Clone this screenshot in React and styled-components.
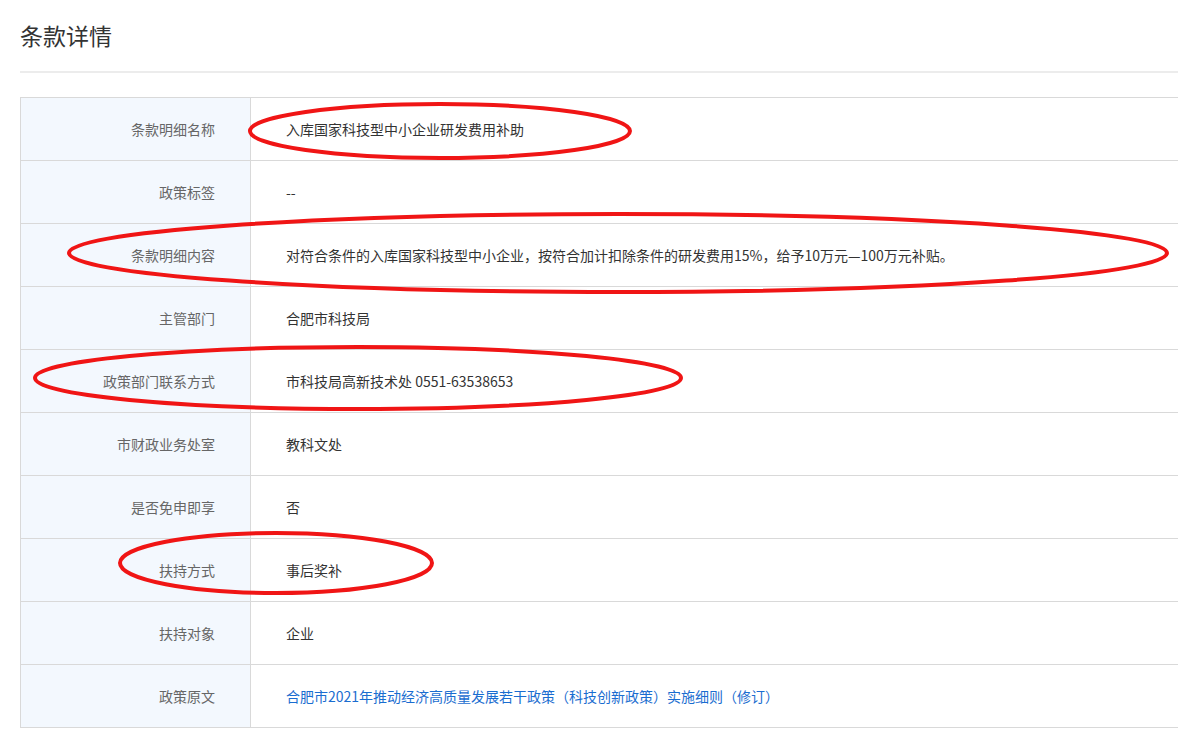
import React from "react";
import styled, { createGlobalStyle } from "styled-components";

const Global = createGlobalStyle`
  html, body { margin: 0; background: #fff; overflow: hidden; }
  body { font-family: "Microsoft YaHei", "Noto Sans CJK SC", "Noto Sans", sans-serif; }
`;

const Page = styled.div`
  position: relative;
  width: 1178px;
  height: 744px;
  padding-left: 20px;
  box-sizing: border-box;
  overflow: hidden;
`;

const Title = styled.h2`
  margin: 0;
  height: 71px;
  line-height: 70px;
  font-size: 23px;
  font-weight: 400;
  color: #333;
  border-bottom: 2px solid #ececec;
`;

const Table = styled.div`
  margin-top: 24px;
  width: 1200px;
  border: 1px solid #d9d9d9;
  border-right: none;
  border-bottom: none;
`;

const Row = styled.div`
  display: grid;
  grid-template-columns: 230px 1fr;
  height: 62px;
  border-bottom: 1px solid #d9d9d9;
`;

const Label = styled.div`
  background: #f3f8fe;
  border-right: 1px solid #d9d9d9;
  display: flex;
  align-items: center;
  justify-content: flex-end;
  padding-right: 35px;
  font-size: 14px;
  color: #666;
`;

const Value = styled.div`
  display: flex;
  align-items: center;
  padding-left: 35px;
  font-size: 14px;
  color: ${(p) => (p.$link ? "#1a6dd0" : "#333")};
`;

const Overlay = styled.svg`
  position: absolute;
  left: 0;
  top: 0;
  pointer-events: none;
`;

const rows = [
  ["条款明细名称", "入库国家科技型中小企业研发费用补助"],
  ["政策标签", "--"],
  ["条款明细内容", "对符合条件的入库国家科技型中小企业，按符合加计扣除条件的研发费用15%，给予10万元—100万元补贴。"],
  ["主管部门", "合肥市科技局"],
  ["政策部门联系方式", "市科技局高新技术处 0551-63538653"],
  ["市财政业务处室", "教科文处"],
  ["是否免申即享", "否"],
  ["扶持方式", "事后奖补"],
  ["扶持对象", "企业"],
  ["政策原文", "合肥市2021年推动经济高质量发展若干政策（科技创新政策）实施细则（修订）", true],
];

export default function App() {
  return (
    <Page>
      <Global />
      <Title>条款详情</Title>
      <Table>
        {rows.map(([l, v, link]) => (
          <Row key={l}>
            <Label>{l}</Label>
            <Value $link={link}>{v}</Value>
          </Row>
        ))}
      </Table>
      <Overlay width="1178" height="744">
        <g fill="none" stroke="#f01515" strokeWidth="4">
          <ellipse cx="440" cy="131" rx="190" ry="27" />
          <ellipse cx="618" cy="253" rx="549" ry="39" />
          <ellipse cx="358" cy="378" rx="323" ry="31" />
          <ellipse cx="276" cy="563" rx="156" ry="30" />
        </g>
      </Overlay>
    </Page>
  );
}
